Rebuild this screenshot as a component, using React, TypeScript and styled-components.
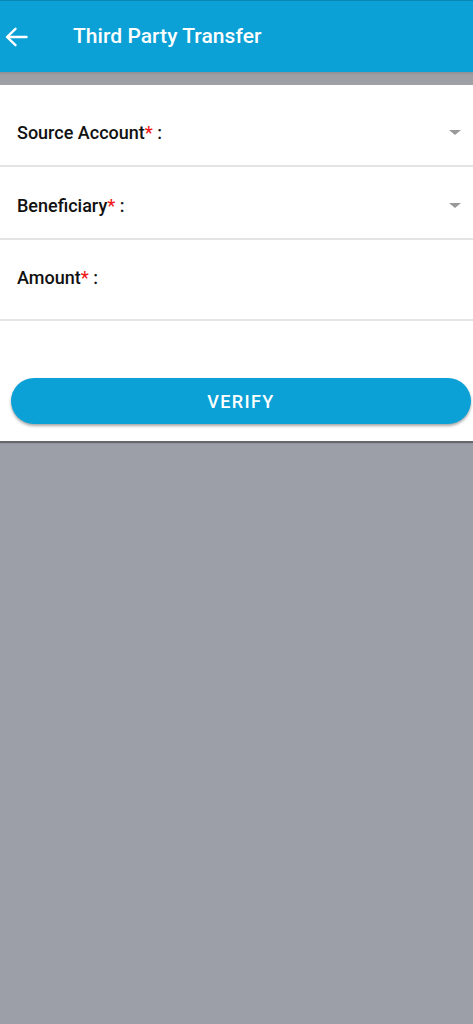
import React from "react";
import styled, { createGlobalStyle } from "styled-components";

const Global = createGlobalStyle`
  html, body { margin: 0; padding: 0; background: #9c9fa7; }
  body { font-family: Roboto, "Noto Sans", sans-serif; }
  * { box-sizing: border-box; }
`;

const Page = styled.div`
  width: 473px;
  min-height: 1024px;
  background: #9c9fa7;
  display: flex;
  flex-direction: column;
`;

const Header = styled.header`
  height: 72px;
  background: #0ba1d6;
  border-top: 1px solid #0a86b3;
  display: flex;
  align-items: center;
  padding-left: 4px;
  gap: 45px;
`;

const BackButton = styled.button`
  background: none;
  border: none;
  padding: 0;
  width: 24px;
  height: 24px;
  display: flex;
  align-items: center;
  justify-content: center;
  color: #fff;
`;

const Title = styled.h1`
  margin: 0;
  color: #fff;
  font-family: Roboto, sans-serif;
  font-weight: 500;
  font-size: 21px;
  letter-spacing: 0.05px;
  margin-top: -1px;
`;

const Band = styled.div`
  height: 13px;
  background: linear-gradient(#8e8e94 0px, #9d9ea4 3px, #a0a1a7 100%);
`;

const Card = styled.div`
  background: #fff;
  padding-top: 14px;
  padding-bottom: 17px;
  box-shadow: 0 2px 1px rgba(0, 0, 0, 0.35);
`;

const Row = styled.div<{ $h: number; $pt?: number; $pb?: number }>`
  height: ${(p) => p.$h}px;
  padding: ${(p) => p.$pt ?? 0}px 12px ${(p) => p.$pb ?? 0}px 17px;
  border-bottom: 2px solid #e4e4e4;
  display: flex;
  align-items: center;
`;

const Label = styled.span`
  flex: 1;
  font-family: Roboto, sans-serif;
  font-weight: 500;
  font-size: 18px;
  color: #111;
`;

const Star = styled.span`
  color: #f01818;
`;

const Caret = styled.span`
  width: 0;
  height: 0;
  border-left: 6px solid transparent;
  border-right: 6px solid transparent;
  border-top: 5px solid #9a9a9a;
`;

const ButtonWrap = styled.div`
  padding: 57px 2px 0 11px;
`;

const VerifyButton = styled.button`
  width: 100%;
  height: 46px;
  border: none;
  border-radius: 23px;
  background: #0ba1d6;
  color: #fff;
  font-family: Roboto, sans-serif;
  font-weight: 500;
  font-size: 18px;
  letter-spacing: 1.4px;
  box-shadow: 0 2px 3px rgba(0, 0, 0, 0.35);
`;

const ArrowIcon = () => (
  <svg width="24" height="24" viewBox="0 0 24 24" fill="none">
    <path
      d="M22.5 12H3.5M11.5 3.8L3 12L11.5 20.2"
      stroke="#fff"
      strokeWidth="2.4"
      strokeLinecap="round"
      strokeLinejoin="round"
    />
  </svg>
);

export default function App() {
  return (
    <Page>
      <Global />
      <Header>
        <BackButton aria-label="Back">
          <ArrowIcon />
        </BackButton>
        <Title>Third Party Transfer</Title>
      </Header>
      <Band />
      <Card>
        <Row $h={68}>
          <Label>
            Source Account<Star>*</Star> :
          </Label>
          <Caret />
        </Row>
        <Row $h={73} $pt={6}>
          <Label>
            Beneficiary<Star>*</Star> :
          </Label>
          <Caret />
        </Row>
        <Row $h={81} $pb={4}>
          <Label>
            Amount<Star>*</Star> :
          </Label>
        </Row>
        <ButtonWrap>
          <VerifyButton>VERIFY</VerifyButton>
        </ButtonWrap>
      </Card>
    </Page>
  );
}
